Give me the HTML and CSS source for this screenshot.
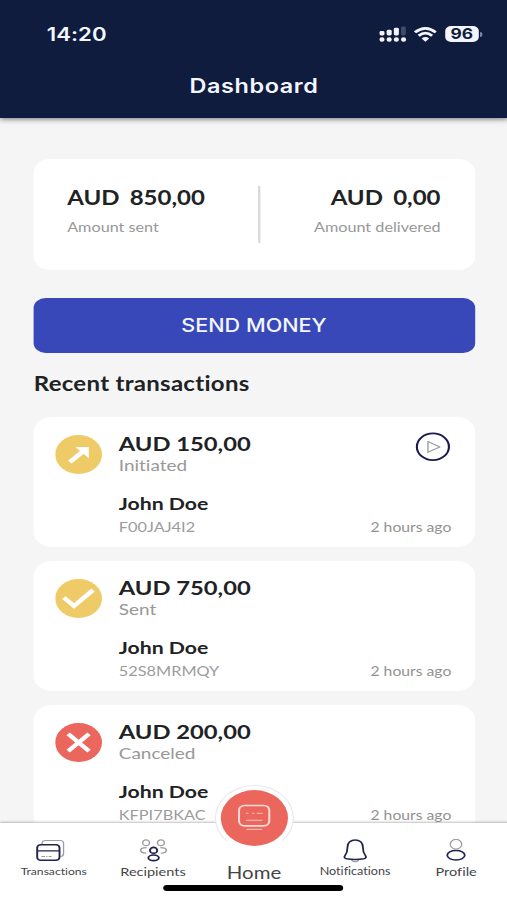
FILE: index.html
```html
<!DOCTYPE html>
<html lang="en">
<head>
<meta charset="utf-8">
<title>Dashboard</title>
<link rel="stylesheet" href="styles.css">
</head>
<body>
<div class="screen">
  <header class="header">
    <div class="status">
      <span class="clock">14:20</span>
      <div class="indicators">
        <svg class="signal" width="23" height="16" viewBox="0 0 23 16" fill="#f4f6ff">
          <rect x="0.2" y="5" width="4.2" height="4.4" rx="1.4"/><rect x="6.2" y="3.8" width="4.2" height="5.6" rx="1.4"/><rect x="12.2" y="1.8" width="4.2" height="7.6" rx="1.4"/><rect x="18.2" y="0.5" width="4" height="8.9" rx="1.4" opacity=".22"/>
          <rect x="0.2" y="11.3" width="4.2" height="4.4" rx="2"/><rect x="6.2" y="11.3" width="4.2" height="4.4" rx="2"/><rect x="12.2" y="11.3" width="4.2" height="4.4" rx="2"/><rect x="18.2" y="11.3" width="4.2" height="4.4" rx="2"/>
        </svg>
        <svg class="wifi" width="19" height="15" viewBox="0 0 18 14" fill="none" stroke="#f4f6ff" stroke-width="2.5">
          <path d="M.8 5Q9-2.6 17.2 5M3.7 8.2Q9 3.4 14.3 8.2"/><path d="M6 10.8Q9 8 12 10.8L9 13.8Z" fill="#f4f6ff" stroke="none"/>
        </svg>
        <div class="battery">96</div><i class="battery-tip"></i>
      </div>
    </div>
    <h1 class="title">Dashboard</h1>
  </header>

  <main class="content">
    <section class="summary">
      <div class="total"><div class="total-value"><span>AUD</span><span>850,00</span></div><div class="total-label">Amount sent</div></div>
      <div class="divider"></div>
      <div class="total right"><div class="total-value"><span>AUD</span><span>0,00</span></div><div class="total-label">Amount delivered</div></div>
    </section>
    <button class="send">SEND MONEY</button>
    <h2 class="heading">Recent transactions</h2>

    <div class="list">
      <article class="card">
        <svg class="badge" viewBox="0 0 39 39"><circle cx="19.5" cy="19.5" r="19.5" fill="#efcb68"/><path d="M12.2 27L24.5 15.2" stroke="#fff" stroke-width="4.2"/><path d="M16.8 12H28v11.2Z" fill="#fff"/></svg>
        <div class="info"><div class="amount">AUD 150,00</div><div class="state">Initiated</div><div class="name">John Doe</div><div class="meta"><span class="code">F00JAJ4I2</span><span class="time">2 hours ago</span></div></div>
        <svg class="play" viewBox="0 0 30 30" fill="none"><circle cx="15" cy="15" r="13.6" stroke="#1c1a52" stroke-width="1.8"/><path d="M10.8 9.7L20.9 15.2L10.8 20.7Z" stroke="#a0a0a3" stroke-width="1.2" stroke-linejoin="round"/></svg>
      </article>
      <article class="card">
        <svg class="badge" viewBox="0 0 39 39"><circle cx="19.5" cy="19.5" r="19.5" fill="#efcb68"/><path d="M7.2 18.6L15.7 27L31.6 11" fill="none" stroke="#fff" stroke-width="4"/></svg>
        <div class="info"><div class="amount">AUD 750,00</div><div class="state">Sent</div><div class="name">John Doe</div><div class="meta"><span class="code">52S8MRMQY</span><span class="time">2 hours ago</span></div></div>
      </article>
      <article class="card">
        <svg class="badge" viewBox="0 0 39 39"><circle cx="19.5" cy="19.5" r="19.5" fill="#eb665d"/><path d="M10.8 10.8L28.2 28.2M28.2 10.8L10.8 28.2" stroke="#fff" stroke-width="4"/></svg>
        <div class="info"><div class="amount">AUD 200,00</div><div class="state">Canceled</div><div class="name">John Doe</div><div class="meta"><span class="code">KFPI7BKAC</span><span class="time">2 hours ago</span></div></div>
      </article>
    </div>
  </main>

  <footer class="footer">
    <nav class="tabs">
      <a class="tab first">
        <svg width="24" height="24" viewBox="0 0 24 24" fill="none"><path d="M5 5.5V4.5Q5 1.5 8 1.5H20Q23 1.5 23 4.5V14.5Q23 17.5 20.5 17.5" stroke="#999ba0" stroke-width="1.1"/><rect x="1" y="5.7" width="18.6" height="15.6" rx="3" stroke="#20234f" stroke-width="1.6"/><path d="M1 11.9H19.6" stroke="#20234f" stroke-width="1.4"/><path d="M4.5 17.5H7.5M8.5 17.5H9.6M10.6 17.5H13" stroke="#999ba0"/></svg>
        <span class="label small">Transactions</span>
      </a>
      <a class="tab">
        <svg width="24" height="24" viewBox="0 0 24 24" fill="none" stroke="#999ba0" stroke-width="1.2"><circle cx="5.7" cy="3.8" r="2.9"/><circle cx="18.1" cy="3.8" r="2.9"/><path d="M5.8 14.2C2.6 14.2 1.2 12.9 1.2 11.3S3.2 8.7 6.2 8.7M18 14.2C21.2 14.2 22.6 12.9 22.6 11.3S20.6 8.7 17.6 8.7"/><circle cx="12" cy="11.4" r="3" stroke="#20234f" stroke-width="1.6"/><ellipse cx="12" cy="18.8" rx="4.4" ry="2.8" stroke="#20234f" stroke-width="1.6"/></svg>
        <span class="label">Recipients</span>
      </a>
      <a class="tab home">
        <span class="ring"><span class="bubble"><svg width="28" height="28" viewBox="0 0 28 28" fill="none" stroke="#ffd9d5"><rect x="1.2" y="1.5" width="25.2" height="20.3" rx="4.5" stroke-width="1.7"/><path d="M7 9.3H9M12 9.3H14M16 9.3H21" stroke="#f5aaa4" stroke-width="1.2"/><path d="M7 16.3H20.7M7.2 25.3H20.5" stroke="#f7b5af" stroke-width="1.2"/></svg></span></span>
        <span class="label big">Home</span>
      </a>
      <a class="tab">
        <svg width="24" height="24" viewBox="0 0 24 24" fill="none" stroke-linejoin="round"><path d="M9 21.2Q12 24 15 21.2" stroke="#999ba0" stroke-width="1.3"/><path d="M12 1C8.4 1 5.6 3.6 5.6 8C5.6 13 5 14.2 3.6 16.3C2.5 18.1 2.8 19.3 4.8 19.8Q12 21.4 19.2 19.8C21.2 19.3 21.5 18.1 20.4 16.3C19 14.2 18.4 13 18.4 8C18.4 3.6 15.6 1 12 1Z" stroke="#20234f" stroke-width="1.5"/></svg>
        <span class="label mid">Notifications</span>
      </a>
      <a class="tab">
        <svg width="24" height="24" viewBox="0 0 24 24" fill="none"><circle cx="12" cy="5.2" r="4.8" stroke="#999ba0" stroke-width="1.1"/><ellipse cx="12" cy="16.3" rx="7.3" ry="4.7" stroke="#20234f" stroke-width="1.5"/></svg>
        <span class="label">Profile</span>
      </a>
    </nav>
    <div class="grabber"></div>
  </footer>
</div>
</body>
</html>
```

FILE: styles.css
```css
* { box-sizing: border-box; }
html, body { margin: 0; height: 900px; overflow: hidden; background: #f5f5f5; }

.screen {
  width: 422.5px; height: 900px; display: flex; flex-direction: column;
  transform: scaleX(1.2); transform-origin: 0 0;
  font-family: Lato, "Liberation Sans", sans-serif; color: #202224;
  font-variant-ligatures: none;
  overflow: hidden; background: #f5f5f5;
}

.header {
  position: relative; z-index: 1; height: 118px; flex: none;
  background: #101c3d; color: #f4f6ff;
  box-shadow: 0 1px 5px rgba(0, 0, 0, .55);
  font-family: Inter, "Liberation Sans", sans-serif;
}
.status { display: flex; justify-content: space-between; align-items: center; padding: 22px 21px 0 39px; height: 46px; }
.clock { font-size: 18.5px; font-weight: 600; line-height: 24px; }
.indicators { display: flex; align-items: center; }
.wifi { margin: 0 6.5px 0 6px; }
.battery { width: 28.5px; height: 16px; border-radius: 5px; background: #f4f6ff; color: #101c3d; font-size: 14.5px; font-weight: 700; line-height: 16.5px; text-align: center; }
.battery-tip { width: 1.5px; height: 5px; margin-left: 1px; border-radius: 0 2px 2px 0; background: #7c849c; }
.title { margin: 28px 0 0; text-align: center; font-size: 19.5px; font-weight: 600; line-height: 24px; letter-spacing: .5px; text-indent: .8px; }

.content { flex: 1; min-height: 0; overflow: hidden; padding: 41px 27px 0 27.8px; }
.summary { height: 111px; border-radius: 14px; background: #fff; display: flex; justify-content: space-between; padding: 27px 28.4px 0 28.2px; }
.total { width: 140px; margin-top: -2px; }
.right { text-align: right; }
.right .total-value { justify-content: flex-end; }
.total-value { display: flex; gap: 8.5px; font-size: 20px; font-weight: 700; line-height: 26px; }
.total-label { margin-top: 8px; font-size: 13.5px; line-height: 18px; color: #989898; }
.divider { width: 2px; height: 57px; margin-left: 8.5px; background: #dadada; }
.send { display: block; width: 100%; height: 55px; margin: 28px 0 0; padding: 0; border: 0; border-radius: 10px; background: #3848b8; color: #f4f6ff; font: 500 18px/55px Inter, "Liberation Sans", sans-serif; text-align: center; }
.heading { margin: 17px 0 21px .3px; font-size: 20px; font-weight: 700; line-height: 26px; letter-spacing: .24px; }

.list { display: flex; flex-direction: column; gap: 14px; }
.card { height: 130px; flex: none; display: flex; align-items: flex-start; position: relative; background: #fff; border-radius: 15px; padding: 13px 19.4px 0 18.7px; }
.badge { width: 39px; height: 39px; margin: 5px 13.5px 0 0; flex: none; }
.info { flex: 1; }
.amount { font-size: 19.8px; font-weight: 700; line-height: 26px; }
.state { font-size: 15.8px; line-height: 18px; color: #989898; }
.name { margin-top: 18px; font-size: 17.7px; font-weight: 700; line-height: 24px; }
.meta { display: flex; justify-content: space-between; font-size: 13.1px; line-height: 20px; padding-top: 1px; color: #929292; }
.code { font-size: 13.6px; color: #9c9c9c; }
.play { position: absolute; right: 20.4px; top: 15px; width: 29.5px; height: 29.5px; }

.footer { position: relative; height: 77px; flex: none; background: #fff; box-shadow: 0 -1px 2px rgba(0, 0, 0, .25); }
.tabs { display: grid; grid-template-columns: repeat(5, 84.2px); justify-content: center; height: 62px; padding-left: .9px; }
.tab { display: flex; flex-direction: column; align-items: center; padding-top: 16px; color: #444548; }
.first { padding-left: 3px; }
.first svg { margin-left: -5px; }
.tab > svg { display: block; flex: none; }
.label { margin-top: 1px; font-size: 12.1px; line-height: 16px; }
.small { margin-top: 0; font-size: 10.1px; }
.mid { margin-top: 0; font-size: 10.5px; }
.big { margin-top: 11px; font-size: 17px; line-height: 22px; }
.home { padding-top: 0; }
.ring { width: 66px; height: 66px; margin-top: -38px; flex: none; border-radius: 50%; background: #fff; display: grid; place-items: center; border: 1px solid #e8e8e8; border-bottom-color: #fff; }
.bubble { width: 56px; height: 56px; border-radius: 50%; background: #eb665d; display: grid; place-items: center; }
.bubble svg { display: block; }
.grabber { width: 150px; height: 6px; border-radius: 3px; margin: 0 auto; background: #000; }
```
